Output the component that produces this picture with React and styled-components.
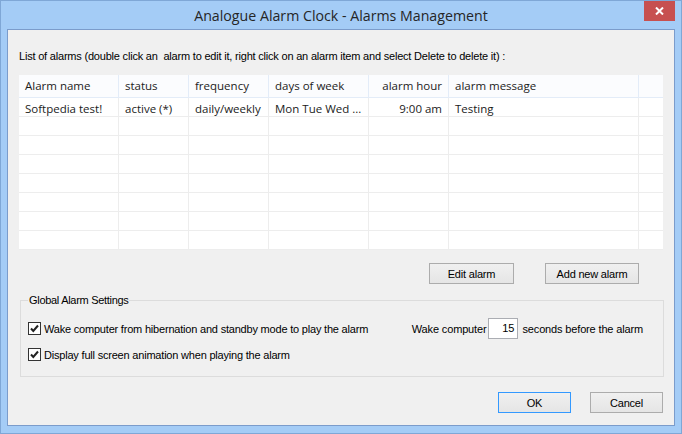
import React from 'react'
import styled, { createGlobalStyle } from 'styled-components'

const GlobalStyle = createGlobalStyle`
  html, body {
    margin: 0;
    padding: 0;
    background: #a4ccf6;
  }
  body {
    width: 682px;
    height: 434px;
    overflow: hidden;
  }
  * {
    box-sizing: border-box;
  }
`

const Window = styled.div`
  width: 682px;
  height: 434px;
  background: #a4ccf6;
  border: 1px solid #7fa7d6;
  padding: 0 6px 7px 6px;
  display: flex;
  flex-direction: column;
`

const TitleBar = styled.div`
  height: 28px;
  flex: none;
  display: grid;
  grid-template-columns: 1fr auto 1fr;
  align-items: start;
`

const Title = styled.div`
  grid-column: 2;
  font-family: 'Open Sans', sans-serif;
  font-size: 14.2px;
  line-height: 29px;
  color: #262626;
  white-space: nowrap;
`

const CloseButton = styled.div`
  grid-column: 3;
  justify-self: end;
  width: 31px;
  height: 20px;
  background: #c75050;
  display: flex;
  align-items: center;
  justify-content: center;
`

const Client = styled.div`
  flex: 1;
  background: #f0f0f0;
  border: 1px solid #7b9ccb;
  padding: 0 11px 0 11px;
  display: flex;
  flex-direction: column;
  font-family: 'Liberation Sans', Arial, sans-serif;
  font-size: 11px;
  color: #000;
`

const Caption = styled.div`
  margin-top: 20px;
  line-height: 13px;
  letter-spacing: -0.2px;
  white-space: nowrap;
`

const Grid = styled.div`
  margin-top: 12px;
  background: #fff;
  font-family: 'Open Sans', sans-serif;
  font-size: 11.5px;
  color: #1b1b1b;
`

const Row = styled.div`
  display: grid;
  grid-template-columns: 100px 70px 80px 100px 80px 190px 1fr;
  height: ${p => (p.$head ? 23 : 19)}px;
  background: ${p => (p.$head ? '#fbfcfe' : '#fff')};
  border-bottom: 1px solid ${p => (p.$head ? '#e3ecf8' : '#ededed')};
`

const Cell = styled.div`
  padding: ${p => (p.$head ? 0 : 2)}px 6px 0;
  line-height: ${p => (p.$head ? 22 : 17)}px;
  border-right: 1px solid ${p => (p.$head ? '#e3ecf8' : '#ededed')};
  text-align: ${p => (p.$right ? 'right' : 'left')};
  white-space: nowrap;
  overflow: hidden;
  &:last-child {
    border-right: none;
  }
`

const ButtonRow = styled.div`
  display: flex;
  justify-content: flex-end;
  gap: ${p => p.$gap}px;
  margin-top: ${p => p.$top}px;
  padding-right: ${p => p.$right}px;
`

const Button = styled.button`
  width: ${p => p.$w}px;
  height: 21px;
  padding: 0;
  font-family: 'Liberation Sans', Arial, sans-serif;
  font-size: 11px;
  letter-spacing: -0.2px;
  color: #000;
  background: linear-gradient(#f0f0f0, #e5e5e5);
  border: 1px solid ${p => (p.$focus ? '#3399ff' : '#acacac')};
  border-radius: 0;
`

const Group = styled.fieldset`
  margin: 10px -1px 0 1px;
  padding: 11px 20px 15px 7px;
  border: 1px solid #dcdcdc;
  min-width: 0;
`

const Legend = styled.legend`
  padding: 0 1px;
  line-height: 13px;
  letter-spacing: -0.3px;
`

const OptionRow = styled.div`
  display: flex;
  align-items: center;
  justify-content: space-between;
  height: ${p => p.$h}px;
  margin-top: ${p => p.$top || 0}px;
`

const Check = styled.label`
  display: flex;
  align-items: center;
  gap: 3px;
  letter-spacing: -0.2px;
  white-space: nowrap;
`

const Wake = styled.div`
  display: flex;
  align-items: center;
  letter-spacing: -0.15px;
  white-space: nowrap;
`

const NumberBox = styled.div`
  width: 30px;
  height: 21px;
  margin: 0 4px 0 2px;
  background: #fff;
  border: 1px solid #abadb3;
  text-align: right;
  padding-right: 3px;
  line-height: 19px;
  letter-spacing: 0;
`

const CheckBox = () => (
  <svg width="13" height="13" viewBox="0 0 13 13">
    <rect x="0.5" y="0.5" width="12" height="12" fill="#fff" stroke="#333" />
    <path d="M3 6.5 L5.3 9 L10 3.5" fill="none" stroke="#222" strokeWidth="2" />
  </svg>
)

const columns = ['Alarm name', 'status', 'frequency', 'days of week', 'alarm hour', 'alarm message', '']
const alarm = ['Softpedia test!', 'active (*)', 'daily/weekly', 'Mon Tue Wed ...', '9:00 am', 'Testing', '']

export default function App() {
  const empty = Array.from({ length: 7 })
  return (
    <>
      <GlobalStyle />
      <Window>
        <TitleBar>
          <Title>Analogue Alarm Clock - Alarms Management</Title>
          <CloseButton>
            <svg width="9" height="8" viewBox="0 0 9 8">
              <path d="M1 0.5 L8 7.5 M8 0.5 L1 7.5" stroke="#fff" strokeWidth="2" />
            </svg>
          </CloseButton>
        </TitleBar>
        <Client>
          <Caption>
            List of alarms (double click an&nbsp; alarm to edit it, right click on an alarm item and select Delete to delete it) :
          </Caption>
          <Grid>
            <Row $head>
              {columns.map((c, i) => (
                <Cell key={i} $head $right={i === 4}>
                  {c}
                </Cell>
              ))}
            </Row>
            <Row>
              {alarm.map((c, i) => (
                <Cell key={i} $right={i === 4}>
                  {c}
                </Cell>
              ))}
            </Row>
            {empty.map((_, r) => (
              <Row key={r}>
                {columns.map((_, i) => (
                  <Cell key={i} />
                ))}
              </Row>
            ))}
          </Grid>
          <ButtonRow $gap={31} $top={13} $right={24}>
            <Button $w={85}>Edit alarm</Button>
            <Button $w={94}>Add new alarm</Button>
          </ButtonRow>
          <Group>
            <Legend>Global Alarm Settings</Legend>
            <OptionRow $h={21}>
              <Check>
                <CheckBox />
                Wake computer from hibernation and standby mode to play the alarm
              </Check>
              <Wake>
                Wake computer
                <NumberBox>15</NumberBox>
                seconds before the alarm
              </Wake>
            </OptionRow>
            <OptionRow $h={13} $top={9}>
              <Check>
                <CheckBox />
                Display full screen animation when playing the alarm
              </Check>
            </OptionRow>
          </Group>
          <ButtonRow $gap={19} $top={15} $right={0}>
            <Button $w={73} $focus>
              OK
            </Button>
            <Button $w={73}>Cancel</Button>
          </ButtonRow>
        </Client>
      </Window>
    </>
  )
}
